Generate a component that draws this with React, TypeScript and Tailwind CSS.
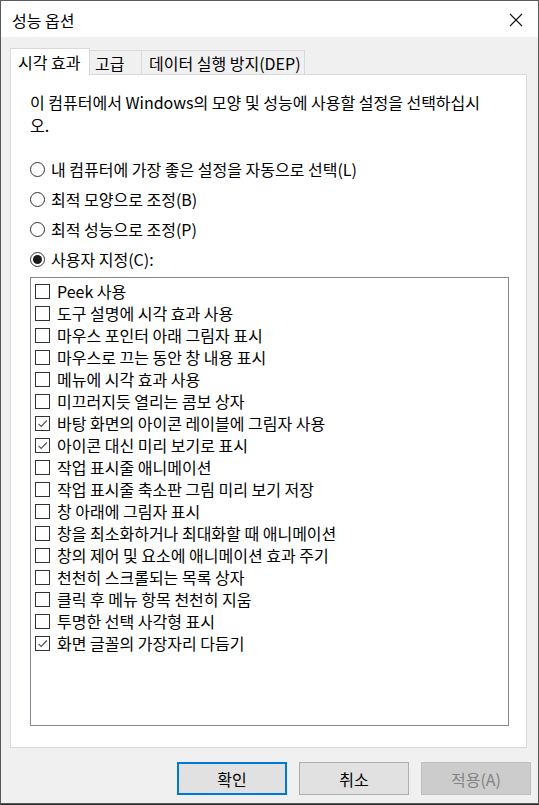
const font = {
	fontFamily: '"Noto Sans CJK KR", "Noto Sans", sans-serif',
};

const options: [string, boolean][] = [
	["Peek 사용", false],
	["도구 설명에 시각 효과 사용", false],
	["마우스 포인터 아래 그림자 표시", false],
	["마우스로 끄는 동안 창 내용 표시", false],
	["메뉴에 시각 효과 사용", false],
	["미끄러지듯 열리는 콤보 상자", false],
	["바탕 화면의 아이콘 레이블에 그림자 사용", true],
	["아이콘 대신 미리 보기로 표시", true],
	["작업 표시줄 애니메이션", false],
	["작업 표시줄 축소판 그림 미리 보기 저장", false],
	["창 아래에 그림자 표시", false],
	["창을 최소화하거나 최대화할 때 애니메이션", false],
	["창의 제어 및 요소에 애니메이션 효과 주기", false],
	["천천히 스크롤되는 목록 상자", false],
	["클릭 후 메뉴 항목 천천히 지움", false],
	["투명한 선택 사각형 표시", false],
	["화면 글꼴의 가장자리 다듬기", true],
];

const radios: [string, boolean][] = [
	["내 컴퓨터에 가장 좋은 설정을 자동으로 선택(L)", false],
	["최적 모양으로 조정(B)", false],
	["최적 성능으로 조정(P)", false],
	["사용자 지정(C):", true],
];

function Radio({ checked }: { checked: boolean }) {
	return (
		<div className="w-[15px] h-[15px] rounded-full border border-[#333333] bg-white flex items-center justify-center shrink-0">
			{checked && <div className="w-[9px] h-[9px] rounded-full bg-[#1a1a1a]" />}
		</div>
	);
}

function CheckBox({ checked }: { checked: boolean }) {
	return (
		<div className="w-[15px] h-[15px] border border-[#333333] bg-white shrink-0 flex items-center justify-center">
			{checked && (
				<svg width="13" height="13" viewBox="0 0 13 13">
					<path d="M2.5 6.8 L5.2 9.5 L10.8 3.5" fill="none" stroke="#4d4d4d" strokeWidth="1.1" />
				</svg>
			)}
		</div>
	);
}

export default function App() {
	return (
		<div className="w-[539px] h-[805px] bg-[#2a2a2a] text-black" style={font}>
			<div className="w-[539px] h-[804px] border border-[#5a5a5a] bg-[#f0f0f0] flex flex-col">
				{/* Title bar */}
				<div className="h-[36px] bg-white flex items-center justify-between pl-[11px] pr-[15px]">
					<span className="text-[16px] leading-[20px] mt-[2px]">성능 옵션</span>
					<svg width="14" height="14" viewBox="0 0 14 14" className="mt-[1px]">
						<path d="M1 1 L13 13 M13 1 L1 13" stroke="#111" strokeWidth="1.1" />
					</svg>
				</div>

				{/* Tabs */}
				<div className="mt-[11px] ml-[9px] h-[26px] flex items-end text-[16px]">
					<div className="relative z-10 h-[27px] -mb-px w-[80px] bg-white border-l border-t border-r border-[#d9d9d9] pl-[7px] leading-[26px] whitespace-nowrap">
						시각 효과
					</div>
					<div className="h-[24px] w-[52px] border-t border-r border-[#d9d9d9] pl-[5px] leading-[24px]">
						고급
					</div>
					<div className="h-[24px] w-[163px] border-t border-r border-[#d9d9d9] pl-[7px] leading-[24px] whitespace-nowrap">
						데이터 실행 방지(DEP)
					</div>
				</div>

				{/* Panel */}
				<div className="ml-[9px] w-[517px] h-[674px] bg-white border border-[#d9d9d9] pt-[16px] pl-[19px] text-[16px]">
					<div className="leading-[23px] whitespace-nowrap">
						<div>이 컴퓨터에서 Windows의 모양 및 성능에 사용할 설정을 선택하십시</div>
						<div>오.</div>
					</div>

					<div className="mt-[17px] flex flex-col">
						{radios.map(([label, checked]) => (
							<div key={label} className="h-[30px] flex items-center gap-[6px]">
								<Radio checked={checked} />
								<span className="leading-[20px]">{label}</span>
							</div>
						))}
					</div>

					{/* Option list */}
					<div className="mt-[3px] w-[479px] h-[449px] border border-[#828790] bg-white pt-[2px] pl-[4px]">
						{options.map(([label, checked]) => (
							<div key={label} className="h-[22px] flex items-center gap-[7px]">
								<CheckBox checked={checked} />
								<span className="leading-[20px] whitespace-nowrap">{label}</span>
							</div>
						))}
					</div>
				</div>

				{/* Buttons */}
				<div className="mt-[14px] flex justify-end gap-[12px] pr-[7px] text-[16px]">
					<button className="w-[110px] h-[33px] bg-[#e1e1e1] border-2 border-[#0078d7] leading-[20px]">
						확인
					</button>
					<button className="w-[110px] h-[33px] bg-[#e1e1e1] border border-[#adadad] leading-[20px]">
						취소
					</button>
					<button className="w-[110px] h-[33px] bg-[#cccccc] border border-[#bfbfbf] text-[#838383] leading-[20px]">
						적용(A)
					</button>
				</div>
			</div>
		</div>
	);
}
